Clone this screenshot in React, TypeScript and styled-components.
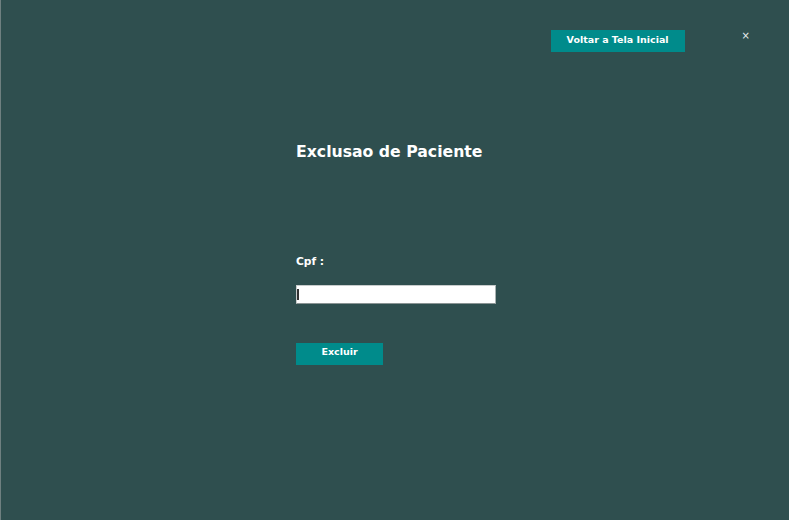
import styled, { createGlobalStyle } from 'styled-components';

const GlobalStyle = createGlobalStyle`
  html, body {
    margin: 0;
    padding: 0;
    background: #2f4f4f;
  }
`;

const Window = styled.div`
  width: 789px;
  height: 520px;
  box-sizing: border-box;
  background: #2f4f4f;
  border-left: 1px solid #6f8080;
  font-family: "DejaVu Sans", "Liberation Sans", sans-serif;
  color: #ffffff;
  overflow: hidden;
`;

const TopBar = styled.div`
  display: flex;
  align-items: center;
  justify-content: flex-end;
  padding: 30px 39px 0 0;
`;

const Button = styled.button<{ $width: number; $top?: number; $lift?: number }>`
  width: ${(p) => p.$width}px;
  height: 22px;
  margin-top: ${(p) => p.$top ?? 0}px;
  border: none;
  border-radius: 0;
  background: #008b8b;
  color: #ffffff;
  font-family: "DejaVu Sans", sans-serif;
  font-weight: bold;
  font-size: 9.5px;
  padding: 0 0 ${(p) => p.$lift ?? 4}px;
  cursor: pointer;
`;

const Close = styled.span`
  margin-left: 57px;
  margin-top: -12px;
  font-size: 10px;
  color: #e8eeee;
`;

const Content = styled.div`
  display: flex;
  flex-direction: column;
  align-items: flex-start;
  padding-left: 295px;
`;

const Title = styled.h1`
  margin: 90px 0 0;
  font-size: 15.7px;
  font-weight: bold;
  line-height: 20px;
`;

const Label = styled.label`
  margin-top: 93px;
  font-size: 10.7px;
  font-weight: bold;
  line-height: 14px;
`;

const Field = styled.div`
  position: relative;
  margin-top: 16px;
`;

const Input = styled.input`
  display: block;
  width: 200px;
  height: 19px;
  box-sizing: border-box;
  border: 1px solid #c8cccc;
  border-bottom-color: #8a9494;
  border-right-color: #aab2b2;
  background: #ffffff;
  padding: 0 2px;
  outline: none;
  font-family: "DejaVu Sans", sans-serif;
  font-size: 11px;
`;

const Caret = styled.span`
  position: absolute;
  left: 1px;
  top: 4px;
  width: 2px;
  height: 11px;
  background: #333;
`;

export default function App() {
  return (
    <Window>
      <GlobalStyle />
      <TopBar>
        <Button $width={134} $lift={4}>Voltar a Tela Inicial</Button>
        <Close>×</Close>
      </TopBar>
      <Content>
        <Title>Exclusao de Paciente</Title>
        <Label htmlFor="cpf">Cpf :</Label>
        <Field>
          <Input id="cpf" />
          <Caret />
        </Field>
        <Button $width={87} $top={39} $lift={5}>Excluir</Button>
      </Content>
    </Window>
  );
}
